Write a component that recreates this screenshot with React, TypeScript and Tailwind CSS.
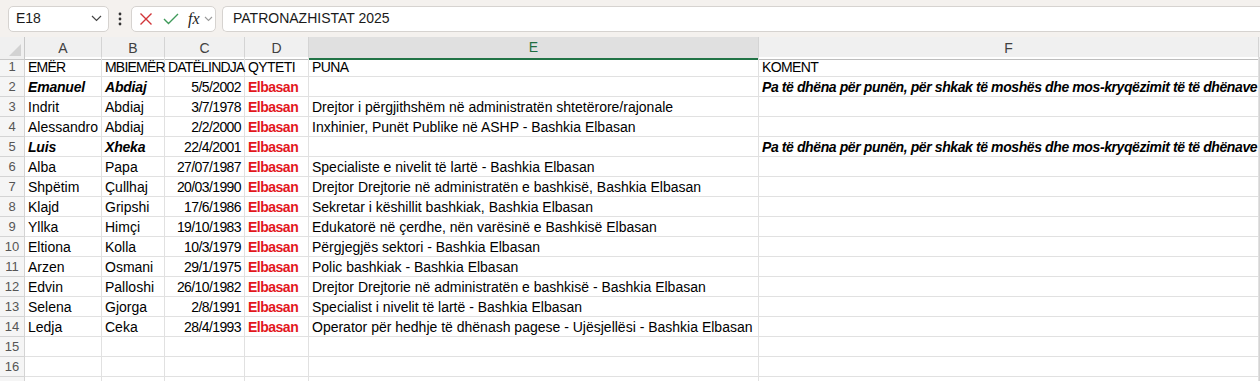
import React from "react";

const font = { fontFamily: "'Liberation Sans', Arial, sans-serif" };

type Row = {
  a?: string; b?: string; c?: string; d?: string; e?: string; f?: string; bi?: boolean;
};

const rows: Row[] = [
  { a: "EMËR", b: "MBIEMËR", c: "DATËLINDJA", d: "QYTETI", e: "PUNA", f: "KOMENT" },
  { a: "Emanuel", b: "Abdiaj", c: "5/5/2002", d: "Elbasan", e: "", f: "Pa të dhëna për punën, për shkak të moshës dhe mos-kryqëzimit të të dhënave", bi: true },
  { a: "Indrit", b: "Abdiaj", c: "3/7/1978", d: "Elbasan", e: "Drejtor i përgjithshëm në administratën shtetërore/rajonale" },
  { a: "Alessandro", b: "Abdiaj", c: "2/2/2000", d: "Elbasan", e: "Inxhinier, Punët Publike në ASHP - Bashkia Elbasan" },
  { a: "Luis", b: "Xheka", c: "22/4/2001", d: "Elbasan", e: "", f: "Pa të dhëna për punën, për shkak të moshës dhe mos-kryqëzimit të të dhënave", bi: true },
  { a: "Alba", b: "Papa", c: "27/07/1987", d: "Elbasan", e: "Specialiste e nivelit të lartë - Bashkia Elbasan" },
  { a: "Shpëtim", b: "Çullhaj", c: "20/03/1990", d: "Elbasan", e: "Drejtor Drejtorie në administratën e bashkisë, Bashkia Elbasan" },
  { a: "Klajd", b: "Gripshi", c: "17/6/1986", d: "Elbasan", e: "Sekretar i këshillit bashkiak, Bashkia Elbasan" },
  { a: "Yllka", b: "Himçi", c: "19/10/1983", d: "Elbasan", e: "Edukatorë në çerdhe, nën varësinë e Bashkisë Elbasan" },
  { a: "Eltiona", b: "Kolla", c: "10/3/1979", d: "Elbasan", e: "Përgjegjës sektori - Bashkia Elbasan" },
  { a: "Arzen", b: "Osmani", c: "29/1/1975", d: "Elbasan", e: "Polic bashkiak - Bashkia Elbasan" },
  { a: "Edvin", b: "Palloshi", c: "26/10/1982", d: "Elbasan", e: "Drejtor Drejtorie në administratën e bashkisë - Bashkia Elbasan" },
  { a: "Selena", b: "Gjorga", c: "2/8/1991", d: "Elbasan", e: "Specialist i nivelit të lartë - Bashkia Elbasan" },
  { a: "Ledja", b: "Ceka", c: "28/4/1993", d: "Elbasan", e: "Operator për hedhje të dhënash pagese - Ujësjellësi - Bashkia Elbasan" },
  {}, {}, {},
];

const cols = "grid-cols-[25px_77px_63px_80px_64px_450px_500px_1fr]";

function Cell({ children, className = "text-black" }: { children?: React.ReactNode; className?: string }) {
  return (
    <div className={`h-[20px] border-r border-b border-[#e1e1e1] px-[3px] flex items-end pb-[0px] whitespace-nowrap overflow-visible text-[14px] leading-[17px] ${className}`}>
      {children}
    </div>
  );
}

export default function App() {
  return (
    <div className="w-[1260px] h-[381px] overflow-hidden bg-white" style={font}>
      {/* Formula bar */}
      <div className="h-[37px] bg-[#f4f1ee] flex items-center pl-[8px]">
        <div className="w-[101px] h-[26px] bg-white border border-[#d6d3d0] rounded-[5px] flex items-center justify-between pl-[7px] pr-[6px]">
          <span className="text-[14px] text-[#1a1a1a]">E18</span>
          <svg width="11" height="7" viewBox="0 0 11 7"><path d="M1 1l4.5 4.5L10 1" fill="none" stroke="#444" strokeWidth="1.2" /></svg>
        </div>
        <div className="w-[22px] flex justify-center">
          <svg width="4" height="14" viewBox="0 0 4 14"><circle cx="2" cy="2" r="1.4" fill="#333" /><circle cx="2" cy="7" r="1.4" fill="#333" /><circle cx="2" cy="12" r="1.4" fill="#333" /></svg>
        </div>
        <div className="w-[85px] h-[26px] bg-white border border-[#d6d3d0] rounded-[5px] flex items-center pl-[6px]">
          <svg width="14" height="14" viewBox="0 0 14 14" className="ml-[1px]"><path d="M1.5 1.5l11 11M12.5 1.5l-11 11" stroke="#d13438" strokeWidth="1.4" /></svg>
          <svg width="16" height="12" viewBox="0 0 16 12" className="ml-[10px]"><path d="M1 6l4.5 4.5L15 1" fill="none" stroke="#3f9a5a" strokeWidth="1.4" /></svg>
          <span className="ml-[9px] italic text-[16px] text-[#222] leading-none" style={{ fontFamily: "'Liberation Serif', 'Times New Roman', serif" }}>fx</span>
          <svg width="9" height="6" viewBox="0 0 9 6" className="ml-[4px]"><path d="M1 1l3.5 3.5L8 1" fill="none" stroke="#9a9a9a" strokeWidth="1.1" /></svg>
        </div>
        <div className="ml-[6px] flex-1 h-[26px] bg-white border-y border-l border-[#d6d3d0] rounded-l-[5px] flex items-center pl-[10px]">
          <span className="text-[14px] text-[#1a1a1a]">PATRONAZHISTAT 2025</span>
        </div>
      </div>

      {/* Column headers */}
      <div className={`grid ${cols} h-[20px] bg-[#f0f0f0]`}>
        <div className="relative border-r border-b border-[#c8c8c8] bg-[#f0f0f0]">
          <svg width="12" height="12" viewBox="0 0 12 12" className="absolute right-[3px] bottom-[3px]"><path d="M12 0V12H0Z" fill="#d2d2d2" /></svg>
        </div>
        {["A", "B", "C", "D", "E", "F"].map((l) => (
          <div
            key={l}
            className={
              l === "E"
                ? "flex items-center justify-center border-r border-[#d4d4d4] border-b-2 border-b-[#217346] bg-[#e0e0e0] text-[#1e6e41] text-[14px]"
                : "flex items-center justify-center border-r border-[#d4d4d4] border-b border-b-[#bdbdbd] text-[#404040] text-[14px]"
            }
          >
            {l}
          </div>
        ))}
        <div className="border-b border-[#bdbdbd] bg-[#f0f0f0]" />
      </div>

      {/* Rows */}
      {rows.map((r, i) => {
        const head = i === 0;
        const bi = r.bi ? "font-bold italic tracking-[-0.2px] text-black" : head ? "tracking-[-0.8px] text-black" : "text-black";
        return (
          <div key={i} className={`grid ${cols}`}>
            <div className="h-[20px] border-r border-b border-[#d4d4d4] bg-[#f5f5f5] flex items-center justify-center pt-[1px] text-[13px] text-[#555]">
              {i < 16 ? i + 1 : ""}
            </div>
            <Cell className={bi}>{r.a}</Cell>
            <Cell className={bi}>{r.b}</Cell>
            <Cell className={head ? "tracking-[-0.8px] text-black" : "justify-end tracking-[-0.6px] text-black"}>{r.c}</Cell>
            <Cell className={head ? "tracking-[-0.6px] text-black" : "font-bold tracking-[-0.5px] text-[#e3171d]"}>{r.d}</Cell>
            <Cell className={head ? "tracking-[-0.6px] text-black" : "text-black"}>{r.e}</Cell>
            <Cell className={r.bi ? "font-bold italic tracking-[-0.4px] text-black" : head ? "tracking-[-0.6px] text-black" : "text-black"}>{r.f}</Cell>
            <div className="h-[20px] bg-[#f3f3f3] border-l border-[#d4d4d4]" />
          </div>
        );
      })}
    </div>
  );
}
